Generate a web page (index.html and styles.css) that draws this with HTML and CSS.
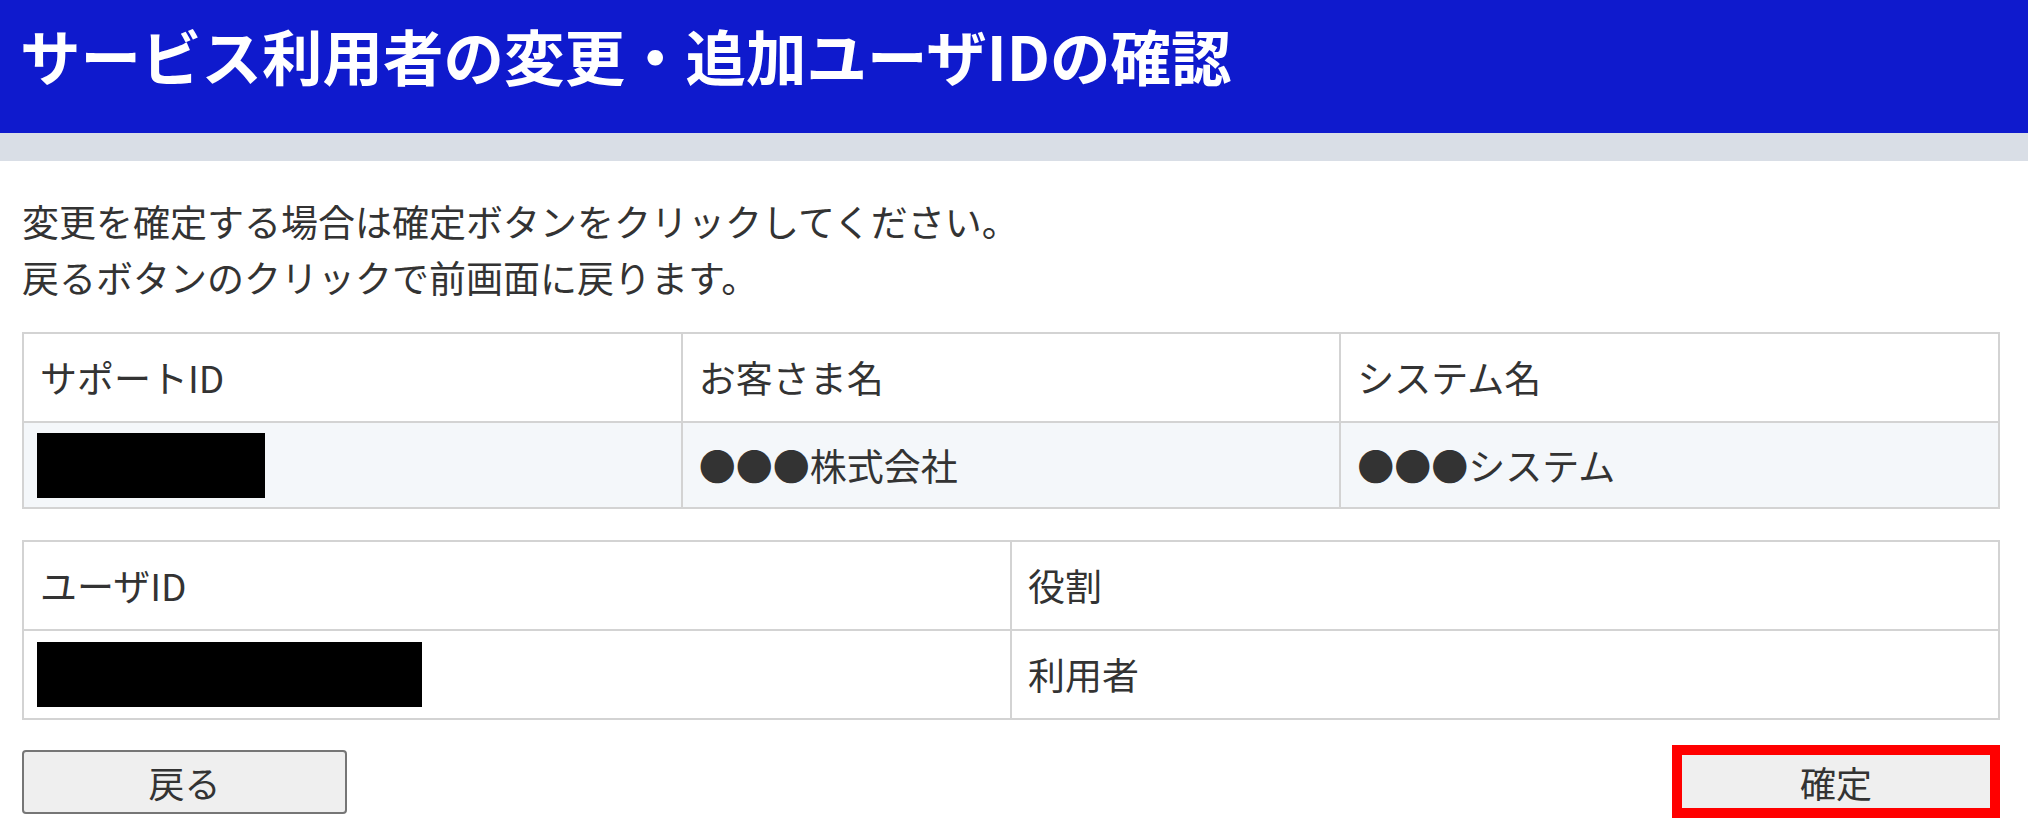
FILE: index.html
```html
<!DOCTYPE html>
<html lang="ja">
<head>
<meta charset="utf-8">
<title>サービス利用者の変更・追加ユーザIDの確認</title>
<link rel="stylesheet" href="styles.css">
</head>
<body>
<header class="page-header">
  <h1 class="page-title">サービス利用者の変更・追加ユーザIDの確認</h1>
</header>
<div class="sub-band"></div>
<main class="content">
  <p class="lead">変更を確定する場合は確定ボタンをクリックしてください。<br>戻るボタンのクリックで前画面に戻ります。</p>
  <table class="info-table three">
    <tr class="head-row">
      <td>サポートID</td>
      <td>お客さま名</td>
      <td>システム名</td>
    </tr>
    <tr class="value-row shaded">
      <td><span class="redact redact-short"></span></td>
      <td>●●●株式会社</td>
      <td>●●●システム</td>
    </tr>
  </table>
  <table class="info-table two">
    <tr class="head-row">
      <td>ユーザID</td>
      <td>役割</td>
    </tr>
    <tr class="value-row">
      <td><span class="redact redact-long"></span></td>
      <td>利用者</td>
    </tr>
  </table>
  <div class="actions">
    <button class="btn btn-back" type="button">戻る</button>
    <div class="highlight">
      <button class="btn btn-confirm" type="button">確定</button>
    </div>
  </div>
</main>
</body>
</html>
```

FILE: styles.css
```css
html, body {
  margin: 0;
  padding: 0;
  background: #ffffff;
}
body {
  font-family: "Noto Sans CJK JP", "Noto Sans", sans-serif;
  color: #333333;
}
.page-header {
  background: #0f1acd;
  height: 133px;
  display: flex;
  align-items: center;
  padding-left: 20px;
  box-sizing: border-box;
}
.page-title {
  margin: 0;
  color: #ffffff;
  font-size: 60.5px;
  font-weight: 700;
  line-height: 1;
  padding-bottom: 22px;
}
.sub-band {
  background: #d9dee6;
  height: 28px;
}
.content {
  padding: 0 28px 0 22px;
}
.lead {
  margin: 32px 0 27px;
  font-size: 37px;
  line-height: 56px;
}
.info-table {
  width: 100%;
  table-layout: fixed;
  border-collapse: collapse;
  font-size: 37px;
  border: 2px solid #d3d3d3;
}
.info-table td {
  border: 2px solid #d3d3d3;
  padding: 0 0 0 16px;
  vertical-align: middle;
  line-height: 1.2;
}
.info-table.three .head-row td { height: 87px; }
.info-table.three .value-row td { height: 84px; }
.info-table.two {
  margin-top: 31px;
}
.info-table.two .head-row td { height: 87px; }
.info-table.two .value-row td { height: 87px; }
.shaded td {
  background: #f4f7fa;
}
.redact {
  display: block;
  background: #000000;
  height: 65px;
  margin-left: -3px;
}
.redact-short { width: 228px; }
.redact-long { width: 385px; }
.actions {
  display: flex;
  justify-content: space-between;
  align-items: center;
  margin-top: 25px;
}
.btn {
  font-family: "Noto Sans CJK JP", "Noto Sans", sans-serif;
  font-size: 36px;
  color: #333333;
  background: #efefef;
  line-height: 1;
  cursor: pointer;
}
.btn-back {
  width: 325px;
  height: 64px;
  border: 2px solid #767676;
  border-radius: 4px;
}
.highlight {
  border: 10px solid #ff0000;
  display: flex;
}
.btn-confirm {
  width: 308px;
  height: 53px;
  border: none;
  border-radius: 0;
}
```
